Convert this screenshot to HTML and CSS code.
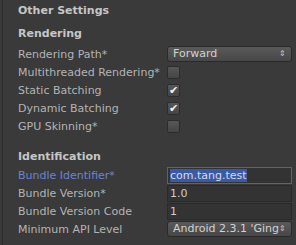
FILE: index.html
```html
<!DOCTYPE html>
<html lang="en">
<head>
  <meta charset="UTF-8">
  <title>Other Settings</title>
  <link rel="stylesheet" href="styles.css">
</head>
<body>
  <div class="janela">
    <div class="painel">
      <div class="titulo">Other Settings</div>

      <div class="secao primeira">Rendering</div>
      <div class="linha">
        <span class="rotulo">Rendering Path*</span>
        <div class="popup">Forward<span class="setas">&#8661;</span></div>
      </div>
      <div class="linha">
        <span class="rotulo">Multithreaded Rendering*</span>
        <span class="caixa"></span>
      </div>
      <div class="linha">
        <span class="rotulo">Static Batching</span>
        <span class="caixa marcada">&#10004;</span>
      </div>
      <div class="linha">
        <span class="rotulo">Dynamic Batching</span>
        <span class="caixa marcada">&#10004;</span>
      </div>
      <div class="linha">
        <span class="rotulo">GPU Skinning*</span>
        <span class="caixa"></span>
      </div>

      <div class="secao espaco">Identification</div>
      <div class="linha">
        <span class="rotulo ativo">Bundle Identifier*</span>
        <div class="campo focado"><span class="selecao">com.tang.test</span></div>
      </div>
      <div class="linha">
        <span class="rotulo">Bundle Version*</span>
        <div class="campo">1.0</div>
      </div>
      <div class="linha">
        <span class="rotulo">Bundle Version Code</span>
        <div class="campo">1</div>
      </div>
      <div class="linha">
        <span class="rotulo">Minimum API Level</span>
        <div class="popup">Android 2.3.1 'Ging<span class="setas">&#8661;</span></div>
      </div>
    </div>
    <div class="rolagem"></div>
  </div>
</body>
</html>
```

FILE: styles.css
```css
body {
  margin: 0;
  background-color: #3a3a3a;
  font-family: "DejaVu Sans", sans-serif;
  font-size: 11px;
  color: #b4b4b4;
}
.janela {
  display: flex;
  height: 245px;
  overflow: hidden;
}
.painel {
  flex: 1;
  margin-left: 2px;
  border-left: 1px solid #2b2b2b;
  border-right: 1px solid #262626;
  padding: 3px 4px 0 15px;
}
.rolagem {
  width: 7px;
  background-color: #3d3d3d;
}
.titulo, .secao {
  font-weight: bold;
  color: #c6c6c6;
}
.titulo {
  height: 22px;
  line-height: 15px;
}
.secao {
  height: 18px;
  line-height: 18px;
}
.primeira {
  margin-bottom: 2px;
}
.espaco {
  margin-top: 13px;
}
.linha {
  display: flex;
  align-items: center;
  height: 18px;
}
.rotulo {
  width: 149px;
  flex-shrink: 0;
  white-space: nowrap;
}
.ativo {
  color: #6c83d8;
}
.popup {
  flex: 1;
  height: 14px;
  line-height: 14px;
  padding: 0 5px;
  border: 1px solid #2a2a2a;
  border-radius: 3px;
  background: linear-gradient(#5a5a5a, #474747);
  color: #d2d2d2;
  display: flex;
  justify-content: space-between;
  white-space: nowrap;
  overflow: hidden;
}
.setas {
  font-size: 8px;
  color: #c8c8c8;
}
.caixa {
  width: 11px;
  height: 11px;
  border: 1px solid #2c2c2c;
  border-radius: 2px;
  background: linear-gradient(#575757, #454545);
  color: #f2f2f2;
  font-size: 11px;
  line-height: 11px;
  text-align: center;
}
.campo {
  flex: 1;
  height: 15px;
  line-height: 15px;
  padding: 0 2px;
  border: 1px solid #2a2a2a;
  background-color: #333333;
  color: #cfcfcf;
}
.focado {
  border-color: #4a5fb8;
}
.selecao {
  background-color: #3b5aa6;
  color: #d8d8e8;
}
```
